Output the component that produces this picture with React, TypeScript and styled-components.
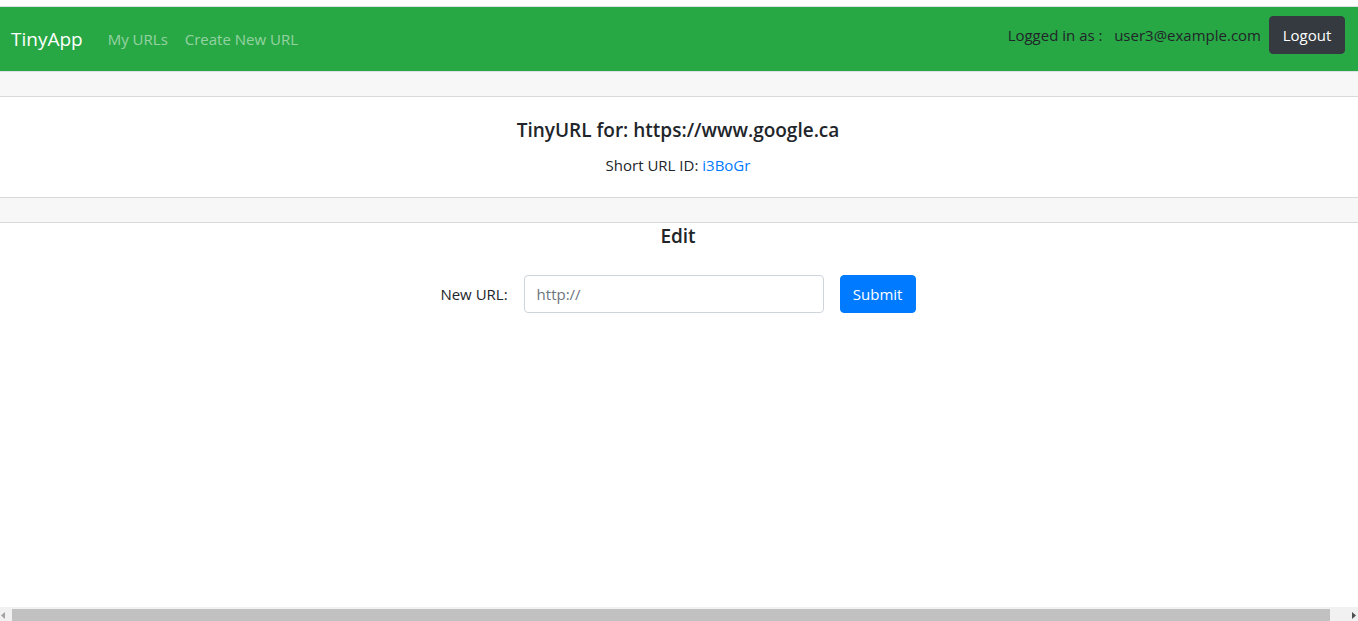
import React, { useState } from "react";
import styled, { createGlobalStyle } from "styled-components";

const GlobalStyle = createGlobalStyle`
  *, *::before, *::after { box-sizing: border-box; }
  body {
    margin: 0;
    background: #fff;
    color: #212529;
    font-family: "Segoe UI", "Open Sans", "Noto Sans", sans-serif;
    font-size: 15px;
    line-height: 24px;
  }
`;

const Page = styled.div`
  display: flex;
  flex-direction: column;
  min-height: 100vh;
  padding-top: 6px;
`;

const Navbar = styled.header`
  display: flex;
  align-items: center;
  justify-content: space-between;
  padding: 9px 13px 9px 11px;
  background: #28a745;
  border: solid #dee2e6;
  border-width: 1px 0;
`;

const NavLinks = styled.nav`
  display: flex;
  align-items: center;
  gap: 17px;
`;

const Brand = styled.a`
  margin-right: 8px;
  color: #fff;
  font-size: 19px;
  line-height: 30px;
  text-decoration: none;
`;

const NavLink = styled.a`
  color: rgba(255, 255, 255, 0.5);
  text-decoration: none;
`;

const Account = styled.form`
  display: flex;
  align-items: center;
  margin: 0 0 8px;
`;

const AccountText = styled.span`
  margin-right: 8px;
  white-space: pre;
`;

const Button = styled.button<{ $color: string }>`
  width: 76px;
  height: 38px;
  padding: 0;
  border: 1px solid ${(p) => p.$color};
  border-radius: 4px;
  background: ${(p) => p.$color};
  color: #fff;
  font: inherit;
  cursor: pointer;
`;

const Band = styled.div`
  padding: 24px 0;
  background: #f7f7f7;
  border-bottom: 1px solid #d9d9d9;
`;

const Card = styled.section`
  padding: 20px 2px 20px 0;
  background: #fff;
  border: solid #d9d9d9;
  border-width: 1px 0;
  text-align: center;
`;

const Title = styled.h2`
  margin: 0;
  font-size: 19px;
  font-weight: 600;
  line-height: 26px;
  text-align: center;
`;

const ShortId = styled.p`
  margin: 10px 0 0;
  line-height: 24px;
`;

const ShortLink = styled.a`
  color: #007bff;
  text-decoration: none;
`;

const EditSection = styled.main`
  flex: 1;
  padding-right: 2px;
`;

const EditForm = styled.form`
  display: flex;
  align-items: center;
  justify-content: center;
  gap: 16px;
  margin-top: 26px;
`;

const UrlInput = styled.input`
  width: 300px;
  height: 38px;
  padding: 6px 12px;
  border: 1px solid #ced4da;
  border-radius: 4px;
  background: #fff;
  color: #495057;
  font: inherit;
  &::placeholder { color: #6c757d; opacity: 1; }
`;

const ScrollBar = styled.div`
  display: flex;
  height: 14px;
  padding: 2px 1px 0 0;
  background: #f1f1f1;
`;

const ScrollThumb = styled.div`
  flex: 1;
  margin: 0 21px 0 6px;
  background: #c1c1c1;
`;

const Arrow = styled.svg`
  flex: none;
  width: 6px;
  height: 12px;
`;

export default function App() {
  const [url, setUrl] = useState("");
  const stay = (e: React.FormEvent) => e.preventDefault();
  return (
    <>
      <GlobalStyle />
      <Page>
        <Navbar>
          <NavLinks>
            <Brand href="#">TinyApp</Brand>
            <NavLink href="#urls">My URLs</NavLink>
            <NavLink href="#new">Create New URL</NavLink>
          </NavLinks>
          <Account onSubmit={stay}>
            <AccountText>{"Logged in as :   user3@example.com"}</AccountText>
            <Button $color="#343a40" type="submit">Logout</Button>
          </Account>
        </Navbar>
        <Band>
          <Card>
            <Title>TinyURL for: https://www.google.ca</Title>
            <ShortId>
              Short URL ID: <ShortLink href="#i3BoGr">i3BoGr</ShortLink>
            </ShortId>
          </Card>
        </Band>
        <EditSection>
          <Title>Edit</Title>
          <EditForm onSubmit={stay}>
            <label htmlFor="new-url">New URL:</label>
            <UrlInput
              id="new-url"
              type="text"
              placeholder="http://"
              value={url}
              onChange={(e) => setUrl(e.target.value)}
            />
            <Button $color="#007bff" type="submit">Submit</Button>
          </EditForm>
        </EditSection>
        <ScrollBar aria-hidden="true">
          <Arrow viewBox="0 0 6 12"><path d="M5 3v7L1 6.500z" fill="#a3a3a3" /></Arrow>
          <ScrollThumb />
          <Arrow viewBox="0 0 6 12"><path d="M1 3v7l4-3.500z" fill="#505050" /></Arrow>
        </ScrollBar>
      </Page>
    </>
  );
}
